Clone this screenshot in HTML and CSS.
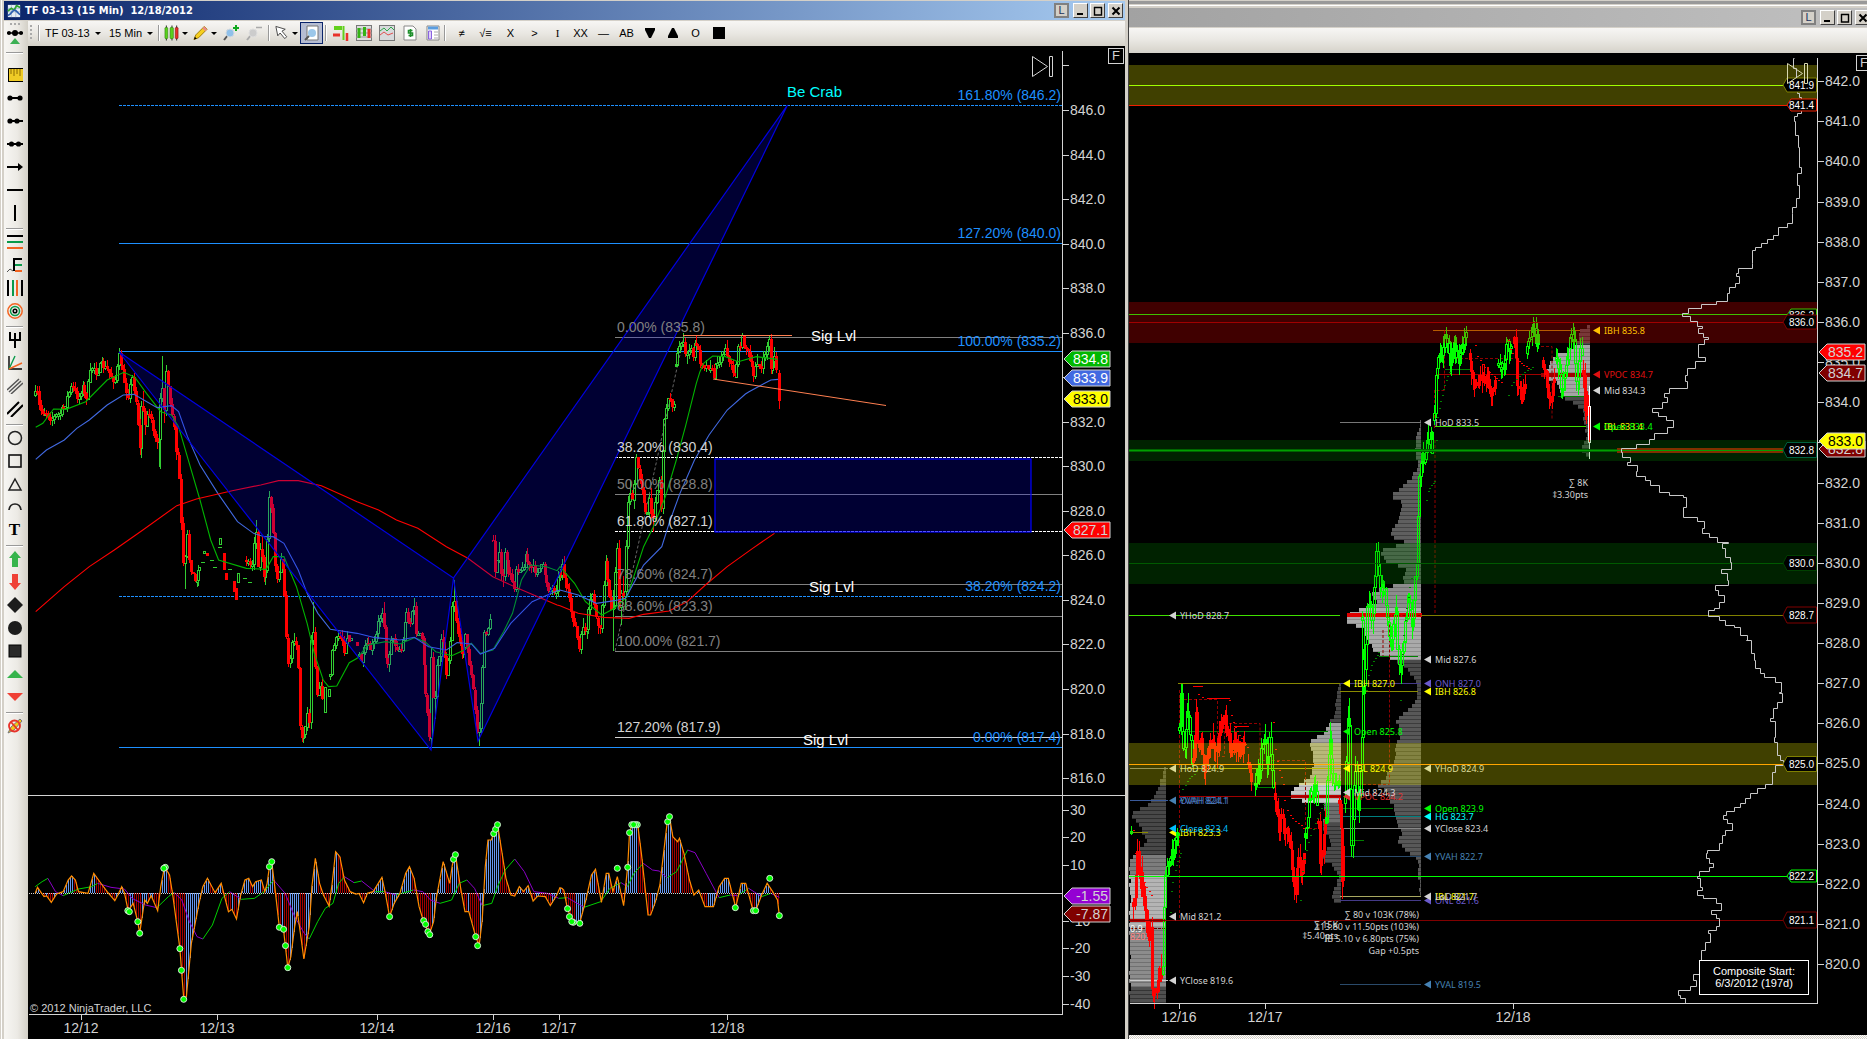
FILE: index.html
```html
<!DOCTYPE html>
<html lang="en">
<head>
<meta charset="utf-8">
<title>TF 03-13 (15 Min) 12/18/2012</title>
<link rel="stylesheet" href="styles.css">
</head>
<body>
<main class="desktop">
  <section class="window window-main">
    <header class="titlebar">
      <svg class="app-icon" viewBox="0 0 16 16"><rect x="1" y="1" width="14" height="14" fill="#e4ecf4"/><path d="M1 5h14M1 9h14M5 1v14M10 1v14" stroke="#a9bccd"/><path d="M1 8l4-3 3 2 3-5 4 2" fill="none" stroke="#2ea52e" stroke-width="2"/><path d="M1 13c4 0 5-7 8-6s3 4 6 5" fill="none" stroke="#2c5fb0" stroke-width="2"/></svg>
      <h1>TF 03-13 (15 Min)&nbsp; 12/18/2012</h1>
      <div class="controls">
        <button class="ctl link">L</button>
        <button class="ctl" aria-label="Minimize"><svg viewBox="0 0 10 10"><path d="M1 8h6" stroke="#000" stroke-width="2"/></svg></button>
        <button class="ctl" aria-label="Maximize"><svg viewBox="0 0 10 10"><path d="M1 1.5h8M1.500 1v8h7v-8" fill="none" stroke="#000" stroke-width="1.400"/></svg></button>
        <button class="ctl close" aria-label="Close"><svg viewBox="0 0 10 10"><path d="M1.500 1.500l7 7m0-7l-7 7" stroke="#000" stroke-width="2"/></svg></button>
      </div>
    </header>
    <div class="body">
      <nav class="drawbar" aria-label="Drawing tools">
        <div class="drawbar-head">
          <span class="grip-h"></span>
          <button aria-label="Snap mode"><svg viewBox="0 0 16 16"><path d="M0 4h16" stroke="#000" stroke-width="1.500"/><circle cx="8" cy="4" r="3"/><circle cx="2" cy="4" r="2"/><circle cx="14" cy="4" r="2"/><path d="M3 15l5-6 5 6z" fill="#3cb054"/></svg></button>
          <span class="rule"></span>
        </div>
        <button aria-label="Ruler"><svg viewBox="0 0 16 16"><rect x="1" y="1.500" width="15" height="13" fill="#efcb26"/><path d="M1.500 15V1.500H16M1 14.500h15" fill="none" stroke="#000"/><path d="M4 2v5M7 2v7M10 2v5M13 2v7" stroke="#8b6a00"/></svg></button>
        <button aria-label="Line"><svg viewBox="0 0 16 16"><path d="M2 8h12" stroke="#000" stroke-width="2"/><circle cx="3" cy="8" r="2.600"/><circle cx="13" cy="8" r="2.600"/></svg></button>
        <button aria-label="Ray"><svg viewBox="0 0 16 16"><path d="M2 8h14" stroke="#000" stroke-width="2"/><circle cx="3" cy="8" r="2.600"/><circle cx="10" cy="8" r="2.600"/></svg></button>
        <button aria-label="Extended line"><svg viewBox="0 0 16 16"><path d="M0 8h16" stroke="#000" stroke-width="2"/><circle cx="4.500" cy="8" r="2.600"/><circle cx="11.500" cy="8" r="2.600"/></svg></button>
        <button aria-label="Arrow line"><svg viewBox="0 0 16 16"><path d="M0 8h13" stroke="#000" stroke-width="2"/><path d="M11 4l5 4-5 4z"/></svg></button>
        <button aria-label="Horizontal line"><svg viewBox="0 0 16 16"><path d="M0 8h16" stroke="#000" stroke-width="2"/></svg></button>
        <button aria-label="Vertical line"><svg viewBox="0 0 16 16"><path d="M8 0v16" stroke="#000" stroke-width="2"/></svg></button>
        <span class="rule"></span>
        <button aria-label="Fibonacci retracements"><svg viewBox="0 0 16 16"><path d="M0 2h16" stroke="#000" stroke-width="2"/><path d="M0 8h16" stroke="#0a9a4a" stroke-width="2"/><path d="M0 14h16" stroke="#f26522" stroke-width="2"/></svg></button>
        <button aria-label="Fibonacci extensions"><svg viewBox="0 0 16 16"><path d="M15 2H7v12" fill="none" stroke="#000" stroke-width="2"/><path d="M8 8h7" stroke="#0a9a4a" stroke-width="2"/><path d="M8 14h7" stroke="#f26522" stroke-width="2"/><path d="M0 15l3-3 3 2" fill="none" stroke="#555"/></svg></button>
        <button aria-label="Fibonacci time"><svg viewBox="0 0 16 16"><path d="M1 0v16M15 0v16" stroke="#000" stroke-width="2"/><path d="M6 0v16" stroke="#0a9a4a" stroke-width="2"/><path d="M10 0v16" stroke="#f26522" stroke-width="2"/></svg></button>
        <button aria-label="Fibonacci circle"><svg viewBox="0 0 16 16" fill="none" stroke-width="1.500"><circle cx="8" cy="8" r="7.200" stroke="#f26522"/><circle cx="8" cy="8" r="4.500" stroke="#0a9a4a"/><circle cx="8" cy="8" r="1.800" stroke="#000"/></svg></button>
        <span class="rule"></span>
        <button aria-label="Andrews pitchfork"><svg viewBox="0 0 16 16"><path d="M3 0v8h10V0M8 1v15" fill="none" stroke="#000" stroke-width="2"/></svg></button>
        <button aria-label="Gann fan"><svg viewBox="0 0 16 16" fill="none" stroke-width="1.400"><path d="M2 1v13h13" stroke="#000"/><path d="M2 14L8 1" stroke="#0a9a4a"/><path d="M2 14l13-6" stroke="#f26522"/></svg></button>
        <button aria-label="Regression channel"><svg viewBox="0 0 16 16"><path d="M0 12L12 1M2 14L14 3M4 16L16 5" stroke="#555" stroke-width="1.500"/></svg></button>
        <button aria-label="Trend channel"><svg viewBox="0 0 16 16"><path d="M0 13L12 1M4 16L16 4" stroke="#000" stroke-width="2"/></svg></button>
        <span class="rule"></span>
        <button aria-label="Ellipse"><svg viewBox="0 0 16 16"><circle cx="8" cy="8" r="6.500" fill="none" stroke="#222" stroke-width="1.500"/></svg></button>
        <button aria-label="Rectangle"><svg viewBox="0 0 16 16"><rect x="2" y="2" width="12" height="12" fill="none" stroke="#111" stroke-width="1.600"/></svg></button>
        <button aria-label="Triangle"><svg viewBox="0 0 16 16"><path d="M8 3l6 11H2z" fill="none" stroke="#222" stroke-width="1.500"/></svg></button>
        <button aria-label="Arc"><svg viewBox="0 0 16 16"><path d="M2 11c1-8 11-8 12 0" fill="none" stroke="#222" stroke-width="1.700"/></svg></button>
        <button class="text-tool" aria-label="Text">T</button>
        <span class="rule"></span>
        <button aria-label="Arrow up"><svg viewBox="0 0 16 16"><path d="M8 0l6 7h-3v9H5V7H2z" fill="#36b44c"/></svg></button>
        <button aria-label="Arrow down"><svg viewBox="0 0 16 16"><path d="M8 16l6-7h-3V0H5v9H2z" fill="#ef4035"/></svg></button>
        <button aria-label="Diamond"><svg viewBox="0 0 16 16"><path d="M8 0l8 8-8 8-8-8z" fill="#1c1c1c"/></svg></button>
        <button aria-label="Dot"><svg viewBox="0 0 16 16"><circle cx="8" cy="8" r="7" fill="#1c1c1c"/></svg></button>
        <button aria-label="Square"><svg viewBox="0 0 16 16"><rect x="2" y="2" width="12" height="12" fill="#2a2a2a" stroke="#000"/></svg></button>
        <button aria-label="Triangle up"><svg viewBox="0 0 16 16"><path d="M8 4l8 8H0z" fill="#36b44c"/></svg></button>
        <button aria-label="Triangle down"><svg viewBox="0 0 16 16"><path d="M8 12l8-8H0z" fill="#ef4035"/></svg></button>
        <span class="rule"></span>
        <button aria-label="Remove drawings"><svg viewBox="0 0 16 16"><path d="M1 15l3-6 9-8 2 2-8 9z" fill="#f5c518" stroke="#777"/><circle cx="7.500" cy="8" r="5.500" fill="none" stroke="#e8322a" stroke-width="1.800"/><path d="M4 4l7 8" stroke="#e8322a" stroke-width="1.800"/></svg></button>
      </nav>
      <div class="content">
        <div class="toolbar">
          <span class="grip-v"></span><span class="vrule"></span>
          <button class="pick instrument">TF 03-13<i class="caret"></i></button>
          <button class="pick interval">15 Min<i class="caret"></i></button>
          <span class="vrule"></span>
          <button class="menu" aria-label="Chart style"><svg viewBox="0 0 16 16"><path d="M2.500 0v16M8.500 0v16M13.500 0v16" stroke="#222"/><rect x="1" y="2" width="3" height="12" rx="1" fill="#5ad11c" stroke="#2a7a0a" stroke-width=".6"/><rect x="6.500" y="2" width="3.500" height="12" rx="1" fill="#5ad11c" stroke="#2a7a0a" stroke-width=".6"/><rect x="12" y="2" width="3" height="12" rx="1" fill="#e8322a" stroke="#7a1010" stroke-width=".6"/></svg><i class="caret"></i></button>
          <button class="menu" aria-label="Draw"><svg viewBox="0 0 16 16"><path d="M1 15l2-5L12 1l3 3-9 9z" fill="#f6cf1e" stroke="#9a7600"/><path d="M12 1l3 3-2 2-3-3z" fill="#e98b8b"/><path d="M1 15l1-3 2 2z"/></svg><i class="caret"></i></button>
          <span class="zoomers">
            <button class="tool" aria-label="Zoom in"><svg viewBox="0 0 16 16"><path d="M1 15l4-5" stroke="#555" stroke-width="2"/><circle cx="7" cy="8" r="4" fill="#8fc0ea" stroke="#cfd8df"/><path d="M13 0v6M10 3h6" stroke="#10a820" stroke-width="2"/></svg></button>
            <button class="tool" aria-label="Zoom out"><svg viewBox="0 0 16 16"><path d="M1 15l4-5" stroke="#aaa" stroke-width="2"/><circle cx="7" cy="8" r="4" fill="#ccc" stroke="#ddd"/><path d="M10 2.500h6" stroke="#aaa" stroke-width="1.500"/></svg></button>
          </span>
          <span class="vrule"></span>
          <button class="menu" aria-label="Cursor"><svg viewBox="0 0 16 16"><path d="M2 1l10 3-3.500 2 5 6-2 2-5-6L4 11z" fill="#fff" stroke="#444"/></svg><i class="caret"></i></button>
          <button class="tool active" aria-label="Data box" aria-pressed="true"><svg viewBox="0 0 16 16"><path d="M3 1h11v14H3z" fill="#fff" stroke="#777"/><circle cx="8" cy="8" r="4" fill="#9cc7ea"/><path d="M1 15l4-4" stroke="#555" stroke-width="2"/></svg></button>
          <span class="vrule tight"></span>
          <button class="tool" aria-label="Chart trader"><svg viewBox="0 0 16 16"><path d="M1 3h8" stroke="#62d01c" stroke-width="4"/><path d="M0 10h7" stroke="#e8322a" stroke-width="3"/><path d="M10.500 1v14" stroke="#62d01c" stroke-width="2"/><path d="M14 8v8" stroke="#e8322a" stroke-width="2.500"/></svg></button>
          <button class="tool" aria-label="Data series"><svg viewBox="0 0 16 16"><rect x=".5" y=".5" width="15" height="15" fill="#ddd" stroke="#777"/><path d="M0 4h16M0 8h16M0 12h16" stroke="#999"/><path d="M3 3v10M8.500 2v9" stroke="#35b315" stroke-width="3"/><path d="M13 4v9" stroke="#e8322a" stroke-width="3"/></svg></button>
          <button class="tool" aria-label="Indicators"><svg viewBox="0 0 16 16"><rect x=".5" y=".5" width="15" height="15" fill="#d8dadc" stroke="#777"/><path d="M1 6l4-3 3 3 4-4 3 3" fill="none" stroke="#2faa4a"/><path d="M1 10l4-3 4 3 5-2" fill="none" stroke="#e05050"/></svg></button>
          <button class="tool" aria-label="Strategies"><svg viewBox="0 0 16 16"><path d="M2 1h9l3 3v11H2z" fill="#fff" stroke="#888"/><path d="M10.500 5.500h-4v2.500h4v2.500h-4M8.500 4v8" fill="none" stroke="#1f8f2c" stroke-width="1.600"/></svg></button>
          <button class="tool" aria-label="Properties"><svg viewBox="0 0 16 16"><path d="M2 1h12v14H2z" fill="#fff" stroke="#888"/><path d="M3 3h10" stroke="#5a9de0" stroke-width="3"/><path d="M3.500 6h3v8h-3z" fill="#ded0fa" stroke="#8a62e0"/><path d="M9 7h4M9 10h4M9 13h4" stroke="#aaa"/></svg></button>
          <span class="vrule"></span>
          <button class="mark">≠</button><button class="mark wide">√≡</button><button class="mark wide">X</button><button class="mark">&gt;</button><button class="mark serif">I</button><button class="mark">XX</button><button class="mark">—</button><button class="mark">AB</button>
          <button class="mark" aria-label="Triangle down marker"><svg viewBox="0 0 12 12"><path d="M1 1h10v2L7 11H5L1 3z"/></svg></button><button class="mark" aria-label="Triangle up marker"><svg viewBox="0 0 12 12"><path d="M1 11h10V9L7 1H5L1 9z"/></svg></button><button class="mark">O</button><button class="mark" aria-label="Square marker"><svg viewBox="0 0 12 12"><path d="M0 0h12v12H0z"/></svg></button>
        </div>
        <div class="chart">
          <svg id="main-chart" viewBox="28 46 1097 993" preserveAspectRatio="xMinYMin meet" role="img" aria-label="TF 03-13 15 minute price and oscillator"></svg>
          <button class="fix">F</button>
        </div>
      </div>
    </div>
  </section>
  <section class="window window-profile">
    <div class="behind"></div>
    <header class="titlebar inactive">
      <div class="controls">
        <button class="ctl link">L</button>
        <button class="ctl" aria-label="Minimize"><svg viewBox="0 0 10 10"><path d="M1 8h6" stroke="#000" stroke-width="2"/></svg></button>
        <button class="ctl" aria-label="Maximize"><svg viewBox="0 0 10 10"><path d="M1 1.500h8M1.500 1v8h7v-8" fill="none" stroke="#000" stroke-width="1.400"/></svg></button>
        <button class="ctl close" aria-label="Close"><svg viewBox="0 0 10 10"><path d="M1.500 1.500l7 7m0-7l-7 7" stroke="#000" stroke-width="2"/></svg></button>
      </div>
    </header>
    <div class="toolbar"></div>
    <div class="chart">
      <svg id="profile-chart" viewBox="1129 53 738 982" preserveAspectRatio="xMinYMin meet" role="img" aria-label="Composite volume profile"></svg>
      <button class="fix fix-edge">F</button>
    </div>
    <div class="scrollbar"></div>
  </section>
</main>
<script src="charts.js"></script>
</body>
</html>
```
FILE: styles.css
```css
* { box-sizing: border-box; }
body { margin: 0; background: #000; font-family: "Liberation Sans", Arial, sans-serif; overflow: hidden; }
button { margin: 0; padding: 0; border: 0; background: none; font: inherit; color: #000; }
.desktop { display: grid; grid-template-columns: 1129fr 738fr; height: 100vh; }
.window { display: flex; flex-direction: column; min-width: 0; min-height: 0; overflow: hidden; }
.window-main { background: #d4d0c8; border-left: 1px solid #d4d0c8; border-right: 1px solid #404040; padding: 1px 3px 0 3px; box-shadow: inset 1px 0 #fff; }
.titlebar { display: flex; align-items: center; flex: none; height: 19px; gap: 4px; padding: 0 2px 0 3px; background: linear-gradient(90deg, #0a246a, #a6caf0); }
.titlebar h1 { margin: 0; flex: 1; font: bold 11px/19px "DejaVu Sans Condensed", "DejaVu Sans", sans-serif; color: #fff; white-space: nowrap; }
.app-icon { width: 14px; height: 16px; }
.controls { display: flex; gap: 2px; margin-left: auto; }
.ctl { display: grid; place-items: center; width: 15px; height: 15px; background: #d4d0c8; border: 1px solid; border-color: #fff #404040 #404040 #fff; font-size: 11px; line-height: 11px; }
.ctl svg { width: 10px; height: 10px; }
.ctl.link { border: 2px solid #808080; color: #20305c; margin-right: 2px; }
.ctl.close { margin-left: 1px; }
.body { display: flex; flex: 1; min-height: 0; padding-top: 1px; }
.drawbar { display: flex; flex-direction: column; align-items: center; flex: none; width: 24px; background: linear-gradient(90deg, #f7f6f3, #eceae5 55%, #d3d0c7); }
.drawbar button { display: grid; place-items: center; flex: none; width: 22px; height: 23px; margin-right: 3px; }
.drawbar svg { width: 16px; height: 16px; }
.drawbar-head { display: flex; flex-direction: column; align-items: center; flex: none; height: 42px; }
.grip-h { width: 10px; height: 2px; margin: 2px 3px 0 0; background: repeating-linear-gradient(90deg, #aaa 0 2px, transparent 2px 4px); }
.rule { flex: none; width: 17px; height: 6px; margin-right: 3px; border-bottom: 1px solid #fff; box-shadow: inset 0 -1px #999; }
.text-tool { font: bold 17px/20px "Liberation Serif", serif; }
.content { display: flex; flex-direction: column; flex: 1; min-width: 0; }
.toolbar { display: flex; align-items: center; flex: none; height: 25px; padding-bottom: 1px; background: linear-gradient(#f7f6f4, #e9e7e2 50%, #d5d2c9); font-size: 11px; }
.grip-v { width: 2px; height: 16px; margin: 0 6px 0 2px; background: repeating-linear-gradient(#aaa 0 2px, transparent 2px 4px); }
.vrule { flex: none; width: 2px; height: 16px; border-left: 1px solid #999; border-right: 1px solid #fff; margin-right: 4px; }
.vrule.tight { margin-right: 2px; }
.pick { display: flex; align-items: center; justify-content: space-between; height: 22px; white-space: nowrap; }
.instrument { width: 56px; margin: 0 8px 0 1px; }
.interval { width: 44px; margin-right: 5px; }
.caret { width: 0; height: 0; border: 3px solid transparent; border-top: 3px solid #000; border-bottom: 0; }
.menu { display: flex; align-items: center; justify-content: space-between; width: 24px; height: 22px; margin-right: 5px; }
.menu svg { width: 15px; height: 16px; }
.zoomers { display: flex; margin: 0 3px 0 -3px; }
.tool { display: grid; place-items: center; width: 23px; height: 22px; }
.tool svg { width: 16px; height: 16px; }
.active { margin: 0 2px 0 -3px; background: #b6bdd2; border: 1px solid #0a246a; }
.mark { display: grid; place-items: center; width: 23px; height: 22px; }
.mark svg { width: 12px; height: 12px; }
.wide { width: 25px; }
.serif { font-family: "Liberation Serif", serif; }
.chart { position: relative; flex: 1; min-height: 0; background: #000; overflow: hidden; }
.chart svg { display: block; width: 100%; height: 100%; }
.fix { position: absolute; top: 2px; right: 1px; width: 16px; height: 16px; border: 1px solid #d3d3d3; color: #d3d3d3; font-size: 13px; line-height: 14px; }
.fix-edge { right: -5px; }
.window-profile { background: #d4d0c8; }
.behind { flex: none; height: 8px; background: linear-gradient(#d4d0c8 0 1px, #999 1px 4px, #d4d0c8 4px 5px, #fff 5px 6px, #d4d0c8 6px); }
.inactive { background: linear-gradient(90deg, #a2a2a2, #c0c0c0); margin-right: -5px; margin-bottom: 1px; }
.scrollbar { flex: none; height: 4px; background: repeating-conic-gradient(#fff 0 25%, #d4d0c8 0 50%) 0 0 / 2px 2px; }
svg text { font-family: "Liberation Sans", Arial, sans-serif; font-size: 14px; fill: #d3d3d3; }
svg .label { font-size: 15px; }
svg .note { font-family: "Noto Sans", "Open Sans", sans-serif; font-size: 9px; }
svg .tag { font-size: 10px; fill: #fff; }
svg .small { font-size: 11px; fill: #fff; }
svg .copy { font-size: 11px; }
svg .end { text-anchor: end; }
svg .mid { text-anchor: middle; }
```
FILE: charts.js
```js
const NS = 'http://www.w3.org/2000/svg';
let seed = 7;
const rnd = () => (seed = (seed * 16807) % 2147483647) / 2147483647;

function add(svg, tag, attrs, text) {
  const el = document.createElementNS(NS, tag);
  for (const k in attrs) el.setAttribute(k, attrs[k]);
  if (text !== undefined) el.textContent = text;
  svg.append(el);
  return el;
}
const nums = s => s.trim().split(/[\s,]+/).map(Number);
// Map "x,y x,y" pairs through an origin and a scale to chart units.
function pts(s, [ox, oy, sx, sy]) {
  const n = nums(s), out = [];
  for (let i = 0; i < n.length; i += 2) out.push([ox + n[i] / sx, oy + n[i + 1] / sy]);
  return out;
}
const line = (svg, x1, y1, x2, y2, stroke, extra = {}) =>
  add(svg, 'line', { x1, y1, x2, y2, stroke, 'shape-rendering': 'crispEdges', ...extra });
const hline = (svg, x1, x2, y, stroke, extra = {}) =>
  add(svg, 'rect', { x: x1, y: Math.floor(y), width: x2 - x1, height: 1, fill: stroke, ...extra });
const dash = (svg, x1, x2, y, stroke, d = '3 1') => line(svg, x1, Math.floor(y) + .5, x2, Math.floor(y) + .5, stroke, { 'stroke-dasharray': d });
const poly = (svg, p, stroke, extra = {}) =>
  add(svg, 'polyline', { points: p.map(a => a.join()).join(' '), fill: 'none', stroke, 'stroke-width': 1, ...extra });
const text = (svg, x, y, cls, fill, s) => add(svg, 'text', { x, y, class: cls, style: 'fill:' + fill }, s);
function at(p, x) {
  for (let i = 1; i < p.length; i++) if (x <= p[i][0]) {
    const [a, b] = [p[i - 1], p[i]];
    return a[1] + (b[1] - a[1]) * (x - a[0]) / ((b[0] - a[0]) || 1);
  }
  return p[p.length - 1][1];
}
function bars(svg, p, step, up, down, force, noise = 8) {
  let g = '', r = '', prev = p[0][1];
  for (let x = p[0][0]; x <= p[p.length - 1][0] + .1; x += step) {
    const near = p.filter(a => a[0] > x - step && a[0] <= x).map(a => a[1]);
    const c = at(p, x) + (rnd() - .5) * noise;
    let hi = Math.min(c, prev, ...near), lo = Math.max(c, prev, ...near);
    const top = Math.round(Math.min(c, prev)), h = Math.max(2, Math.round(Math.abs(c - prev)));
    hi -= rnd() * noise * .8; lo += rnd() * noise * .8;
    const X = Math.round(x);
    const rise = force ? force === 'g' : c <= prev;
    if (rise) g += `M${X + .5} ${Math.round(hi)}V${top}M${X + .5} ${top + h}V${Math.round(lo)}M${X - .5} ${top + .5}h2v${h}h-2z`;
    else r += `M${X + .5} ${Math.round(hi)}V${Math.round(lo)}M${X - .5} ${top}v${h}M${X + 1.5} ${top}v${h}`;
    prev = c;
  }
  const o = { fill: 'none', 'shape-rendering': 'crispEdges' };
  if (g) add(svg, 'path', { d: g, stroke: up, ...o });
  if (r) add(svg, 'path', { d: r, stroke: down, ...o });
}
function priceTag(svg, x, y, fill, ink, s) {
  add(svg, 'path', { d: `M${x} ${y}l8 -8h38v16h-38z`, fill, stroke: '#d3d3d3' });
  text(svg, x + 44, y + 5, 'end', ink, s);
}

/* ---------- main chart ---------- */
const m = document.getElementById('main-chart');
const A = [0, 340, 2.8, 3], B = [560, 380, 2.751, 3], C = [560, 0, 2.751, 3];
const BLUE = '#1e90ff', GREY = '#808080', PALE = '#d3d3d3';

dash(m, 119, 1062, 105, BLUE); hline(m, 119, 1062, 243, BLUE); hline(m, 119, 1062, 351, BLUE);
dash(m, 119, 1062, 596, BLUE); hline(m, 119, 1062, 747, BLUE);
[337, 494, 584, 616, 651].forEach(y => hline(m, 615, 1062, y, GREY));
dash(m, 615, 1062, 457, '#fff'); dash(m, 615, 1062, 531, '#fff'); hline(m, 615, 1062, 737, PALE);
add(m, 'path', { d: 'M615 651L684 336', stroke: '#666', 'stroke-dasharray': '3 2' });

bars(m, pts('98,165 104,160 110,210 130,215 143,235 165,222 180,200 190,165 200,140 218,175 230,135 240,180 252,100 260,72 268,95 285,75 300,90 320,125 333,45 345,110 357,170 370,110 382,200 391,335 397,165 405,270 412,210 425,245 435,320 445,300 446,370 450,130 452,65 458,235 465,90 475,200 485,240 490,340 500,350 505,500 512,650 515,735 522,570 530,670 545,725 556,690', A), 1.9, '#32cd32', '#f00');
bars(m, pts('690,660 705,680 715,550 722,670 730,610 738,720 745,690 753,470 760,500 770,680 777,720 785,640 795,720 800,850 807,980 822,890 832,920 838,1150 845,1205 853,1160 862,1110 868,1160 872,800 880,930 885,1070 893,1030 905,1075', A), 1.9, '#32cd32', '#f00');
bars(m, pts('925,1010 930,930 945,890 955,890 963,930 970,885 985,905', A), 1.9, '#32cd32', '#f00');
bars(m, pts('1005,945 1012,965 1025,910 1035,930 1050,905 1058,850 1072,800 1078,940 1085,980 1095,890 1110,920 1125,930 1135,815 1150,850 1157,780 1165,880 1180,890 1190,1040 1203,1215 1207,940 1215,1120 1222,980 1237,880 1250,1000 1262,880 1268,740 1275,830 1290,940 1303,890 1315,980 1325,1060 1337,1200 1345,1100 1355,890 1365,865 1377,830', A), 1.9, '#32cd32', '#f00');
bars(m, pts('1381,600 1386,690 1395,625 1405,740 1412,640 1425,700 1440,740 1445,680 1462,690 1472,640 1480,680 1500,690 1520,680 1535,745 1555,750 1568,690', A), 1.9, '#32cd32', '#f00');
bars(m, pts('0,575 8,540 12,620 22,640 30,690 40,730 53,815 62,730 72,770 80,680 90,635 103,750 110,740 118,650 125,525 133,640 145,710 149,600 157,490 163,720 170,600 175,690 183,500 190,310 200,380 208,235 213,260 222,300 235,400 243,410 247,325 252,440 262,350 272,300 277,385 283,180 292,75 302,50 312,85 318,0', B), 1.9, '#32cd32', '#f00');
bars(m, pts('318,1100 325,1050 335,1015 345,1075 355,1040 365,1070 373,1015 385,1080 400,1100 412,1095 422,1130 432,1080 445,1070 455,1035 465,1090 480,1125 490,1050 500,1015 510,1040 520,1075 532,1135 540,1075 553,1110 565,1050 576,1015 580,1120 588,1050 596,1130', C), 1.9, '#32cd32', '#f00');
add(m, 'rect', { x: 778, y: 373, width: 3, height: 28, fill: '#f00' });
line(m, 779.5, 370, 779.5, 409, '#f00'); line(m, 159.500, 420, 159.500, 467, '#32cd32'); line(m, 613.5, 590, 613.5, 651, '#32cd32');
// thin overnight trade: isolated bars
const thin = '556,682,8 565,667,1 570,634,6 592,660,1 598,682,1 612,622,1 617,595,18 642,688,1 667,700,27 683,715,1 698,727,1 911,1040,75 920,1048,22'.split(' ');
thin.forEach(t => { const [x, y, h] = t.split(',').map(Number); add(m, 'rect', { x: Math.round(x / 2.8) - .5, y: Math.round(340 + y / 3) + .5, width: h > 1 ? 2 : 3, height: Math.max(.1, Math.round(h / 3)), fill: 'none', stroke: '#32cd32', 'shape-rendering': 'crispEdges' }); });
'580,640,10 626,640,50 632,700,22 654,722,32 660,745,35 978,885,20 1000,905,12'.split(' ').forEach(t => { const [x, y, h] = t.split(',').map(Number); add(m, 'rect', { x: Math.round(x / 2.8) - 1, y: Math.round(340 + y / 3), width: 3, height: Math.round(h / 3), fill: '#f00' }); });

const avg = (a, b, c, col) => poly(m, [...pts(a, A), ...pts(b, B), ...(c ? pts(c, C) : [])], col, { 'stroke-width': 1.1 });
avg('100,262 120,250 150,207 185,208 240,185 300,120 347,97 378,112 410,160 450,215 480,225 500,260 530,370 560,480 590,600 612,660 690,685 745,688 765,650 795,650 830,740 860,850 880,940 905,1020 920,1040 943,1038 978,968 1000,955 1030,915 1080,905 1120,912 1160,893 1190,905 1220,935 1265,947 1300,930 1320,910 1345,940 1380,930 1410,875 1435,820 1460,720 1485,675 1530,680 1560,692',
  '0,560 40,610 70,665 115,705 150,685 185,650 200,600 230,500 255,445 290,350 320,240 345,140 375,10', '385,1115 395,1090 420,1068 455,1070 490,1085 540,1070 598,1078', '#00b400');
avg('100,358 130,330 180,300 215,265 250,240 300,195 345,165 375,163 440,203 480,197 500,215 525,290 560,375 610,460 665,545 710,580 740,590 765,590 795,610 835,690 860,760 890,820 925,868 1000,880 1050,893 1120,900 1160,892 1200,920 1250,930 1280,908 1320,912 1345,942 1385,925 1430,850 1490,785 1560,752',
  '0,630 50,645 100,670 150,662 180,655 205,605 230,555 280,500 300,430 330,340 370,240 410,165 460,90 510,42', '520,1175 580,1140 600,1138', '#4169e1');
avg('100,815 180,740 250,680 320,630 400,570 495,497 550,477 650,452 730,435 780,422 835,422 900,437 1000,485 1060,510 1110,540 1170,565 1250,620 1310,655 1380,710 1450,745 1560,795',
  '0,677 50,700 120,712 190,715 230,703 300,693 350,665 400,615 460,560 530,505 590,460', '', '#f00');

const wing = { fill: '#00f', 'fill-opacity': .2, stroke: '#0000e0', 'stroke-width': 1.2 };
add(m, 'polygon', { points: '119,352 431,750 453.500,578', ...wing });
add(m, 'polygon', { points: '453.500,578 478,741 787.500,105', ...wing });
add(m, 'rect', { x: 715, y: 459, width: 316, height: 73, ...wing, stroke: '#00f' });
add(m, 'path', { d: 'M683 335.500H792M713 379L886 405.500', stroke: '#ff7f50', fill: 'none' });

[['161.80% (846.2)', 100], ['127.20% (840.0)', 238], ['100.00% (835.2)', 346], ['38.20% (824.2)', 591], ['0.00% (817.4)', 742]].forEach(([s, y]) => text(m, 1061, y, 'end', BLUE, s));
[['0.00% (835.8)', 332, GREY], ['38.20% (830.4)', 452, PALE], ['50.00% (828.8)', 489, GREY], ['61.80% (827.1)', 526, PALE], ['78.60% (824.7)', 579, GREY], ['88.60% (823.3)', 611, GREY], ['100.00% (821.7)', 646, GREY], ['127.20% (817.9)', 732, PALE]].forEach(([s, y, c]) => text(m, 617, y, '', c, s));
text(m, 787, 97, 'label', '#0ff', 'Be Crab');
text(m, 811, 341, 'label', '#fff', 'Sig Lvl'); text(m, 809, 592, 'label', '#fff', 'Sig Lvl'); text(m, 803, 745, 'label', '#fff', 'Sig Lvl');
add(m, 'path', { d: 'M1032.500 56.500v20l15-10zM1049.500 56.500h3v20h-3z', fill: 'none', stroke: PALE });

line(m, 1062.5, 51, 1062.5, 1015, PALE);
line(m, 1063, 65.5, 1069, 65.5, PALE);
for (let p = 846; p >= 816; p -= 2) {
  const y = Math.round(110 + (846 - p) * 22.27);
  hline(m, 1063, 1069, y, PALE);
  if (p !== 834) text(m, 1070, y + 5, '', PALE, p.toFixed(1));
}
priceTag(m, 1064, 359, '#00b800', '#fff', '834.8');
priceTag(m, 1064, 378, '#4169e1', '#fff', '833.9');
priceTag(m, 1064, 399, '#ff0', '#000', '833.0');
priceTag(m, 1064, 530, '#f00', PALE, '827.1');

// oscillator panel
hline(m, 28, 1125, 795, PALE); hline(m, 29, 1063, 1014, PALE);
const D = [0, 740, 2.613, 3], E = [560, 740, 2.7034, 3];
const osc = [...pts('92,460 98,442 115,470 122,468 134,487 148,462 165,455 178,420 187,408 197,420 205,455 230,460 245,400 265,432 280,455 300,482 308,465 318,440 325,458 335,512 348,490 360,545 365,580 378,480 385,490 395,467 412,512 420,440 430,380 443,405 452,470 470,625 480,775 487,770 500,610 520,490 530,440 542,415 562,458 578,430 597,515 606,508 618,537 628,470 640,420 650,415 660,440 668,425 683,420 692,455 698,430 704,380 710,365 718,440 730,562 740,560 752,683 760,650 770,560 777,515 785,580 794,657 808,560 815,440 824,355 835,430 845,465 860,498 868,430 877,335 888,350 900,420 915,455 930,462 938,460 950,488 960,460 975,455 998,412 1007,460 1018,530 1030,490 1045,460 1060,400 1070,380 1082,415 1095,500 1107,545 1122,583 1133,545 1140,475 1158,365 1175,430 1182,375 1190,343 1203,440 1215,515 1225,515 1243,590 1252,617 1260,540 1268,380 1275,300 1284,300 1290,280 1300,253 1312,340 1322,415 1335,465 1345,468 1357,440 1368,455 1380,437 1393,483 1405,468 1425,470 1438,497 1455,465 1463,443', D),
  ...pts('5,445 10,450 20,505 35,550 53,550 70,480 85,405 96,388 112,487 125,400 132,400 143,455 155,410 172,497 183,380 188,277 195,254 210,254 220,340 238,525 245,525 258,485 270,435 280,340 290,245 296,230 305,290 318,305 323,295 335,340 350,420 362,465 375,450 392,500 415,500 430,440 445,415 455,415 470,480 475,502 490,430 502,430 522,512 530,510 545,465 560,430 575,455 588,480 593,527', E)];
let last = osc[0][1];
for (let x = 36; x <= 779; x += 2) {
  const y = at(osc, x), t = Math.min(y, 893), h = Math.abs(y - 893);
  if (h > 1) add(m, 'rect', { x, y: Math.round(t), width: 1, height: Math.round(h), fill: y <= last ? '#6495ed' : '#a00000' });
  last = y;
}
const slow = [...pts('92,440 110,425 125,415 145,455 165,467 205,447 240,440 255,430 290,442 325,447 345,475 380,495 410,503 440,470 455,457 475,480 495,545 515,590 530,597 555,555 580,475 600,455 630,478 665,475 690,455 715,420 745,460 770,530 795,580 808,597 830,545 850,505 870,490 885,430 900,410 925,428 945,423 980,455 1005,455 1035,465 1080,450 1105,455 1125,480 1150,490 1180,480 1200,430 1220,420 1240,445 1260,497 1285,490 1300,440 1320,390 1345,357 1370,395 1395,455 1430,460 1460,475', D),
  ...pts('20,473 65,502 110,485 135,445 165,428 182,440 200,400 225,370 250,390 268,393 290,413 315,395 345,330 365,338 395,400 430,473 460,465 480,467 510,445 545,470 570,460 593,472', E)];
for (let i = 1; i < slow.length; i++) poly(m, [slow[i - 1], slow[i]], slow[i][1] <= slow[i - 1][1] ? '#00d000' : '#8b00c8');
dash(m, 29, 780, 893, PALE, '1 1'); hline(m, 780, 1063, 893, PALE);
poly(m, osc, '#ff8c00', { 'stroke-width': 1.2 });
[...pts('334,512 338,515 360,545 365,580 432,382 428,385 470,626 474,691 480,778 704,380 710,365 730,562 741,568 746,617 752,683 1018,530 1107,542 1112,553 1118,575 1123,584 1185,358 1190,344 1243,590 1248,617 1290,281 1295,268 1300,254 1483,506 1488,530 1498,547 1494,545 1515,550', D),
  ...pts('155,385 183,382 188,278 194,254 209,254 204,254 199,254 291,245 296,230 474,503 523,512 529,512 567,415 593,527', E)]
  .forEach(([cx, cy]) => add(m, 'circle', { cx, cy, r: 3, fill: '#0f0', stroke: '#d8e8d8' }));
[[30, 810], [20, 837], [10, 865], [-10, 921], [-20, 948], [-30, 976], [-40, 1004]].forEach(([v, y]) => { hline(m, 1063, 1069, y, PALE); text(m, 1070, y + 5, '', PALE, v); });
priceTag(m, 1064, 896, '#9400d3', PALE, '-1.55'); priceTag(m, 1064, 914, '#800000', PALE, '-7.87');
text(m, 30, 1012, 'copy', PALE, '© 2012 NinjaTrader, LLC');
[[81, '12/12'], [217, '12/13'], [377, '12/14'], [493, '12/16'], [559, '12/17'], [727, '12/18']].forEach(([x, s]) => { line(m, x + .5, 1015, x + .5, 1020, PALE); text(m, x, 1033, 'mid', PALE, s); });

/* ---------- composite profile chart ---------- */
const q = document.getElementById('profile-chart');
const F = [1380, 0, 3, 3], G = [1125, 640, 3, 3], H = [1300, 400, 2.7654, 3], K = [1430, 640, 3, 3];

// volume at price: [y, width] keys, bars grow leftwards from the right edge
function volume(right, keys, shade, step = 4) {
  const k = pts(keys, [0, 0, 1, 1]);
  for (let y = k[0][0]; y < k[k.length - 1][0]; y += step) {
    const w = Math.round(at(k, y) + (rnd() - .5) * 2);
    if (w < 1) continue;
    const c = shade(y);
    add(q, 'rect', { x: right - w, y: Math.round(y), width: w, height: step, fill: `rgb(${c},${c},${c})` });
    add(q, 'rect', { x: right - w, y: Math.round(y) + step - 1, width: w, height: 1, fill: `rgb(${c - 28},${c - 28},${c - 28})` });
  }
}
volume(1166, '767,2 787,8 803,18 813,36 822,28 840,18 850,28 857,36 1002,36', y => y < 855 ? 72 : y < 872 ? 125 : y < 925 ? 180 : y < 985 ? 140 : 80);
volume(1341, '683,2 700,6 710,5 722,12 730,16 740,32 750,29 763,27 773,30 783,42 791,50 798,50 801,19 812,15 826,19 834,12 843,9 856,23 862,10 873,2 886,5 893,10 901,5', y => y < 722 ? 70 : y < 780 ? 160 : y < 800 ? 200 : y < 820 ? 110 : 75);
volume(1421, '420,1 450,6 466,2 480,13 490,25 494,31 500,20 515,21 527,28 535,31 541,14 549,42 560,35 567,15 580,18 585,30 590,50 600,44 610,67 615,75 620,73 628,58 640,52 650,46 657,28 665,15 675,8 683,3 700,5 710,15 719,25 730,20 740,23 752,26 762,28 775,35 784,43 790,35 805,28 815,26 830,20 840,22 850,14 857,4 870,2 898,1', y => y < 583 ? 95 : y < 608 ? 140 : y < 657 ? 170 : y < 700 ? 75 : 88);
volume(1590, '325,2 330,11 343,13 350,25 355,35 363,41 370,45 375,49 380,34 395,27 403,15 410,7 420,6 433,3 447,9 457,2', y => y < 345 ? 75 : y < 397 ? 165 : 75);
add(q, 'rect', { x: 1347, y: 613, width: 75, height: 4, fill: '#e00000' });
add(q, 'rect', { x: 1291, y: 795, width: 50, height: 3, fill: '#c00000' });
add(q, 'rect', { x: 1541, y: 373, width: 49, height: 4, fill: '#a00000' });
add(q, 'rect', { x: 1130, y: 919, width: 36, height: 3, fill: '#b00000' });
dash(q, 1130, 1166, 928, '#600'); text(q, 1130, 932, 'note', '#fff', '0.9'); text(q, 1130, 940, 'note', '#ff8080', '820.');

[[1178, 1341, 683, '#8a8a00'], [1180, 1328, 731, '#008000'], [1180, 1341, 768, '#a0a000'], [1179, 1341, 796, '#a00000'], [1130, 1168, 768, '#777'], [1130, 1168, 800, '#3a5a9a'], [1130, 1148, 832, '#8a8a00'], [1130, 1168, 980, '#ccc'],
 [1340, 1421, 683, '#443a88'], [1340, 1418, 691, '#8a8a00'], [1340, 1393, 808, '#008000'], [1340, 1421, 816, '#008080'], [1340, 1421, 828, '#888'], [1340, 1421, 856, '#2a4a6a'], [1340, 1421, 896, '#a8a860'], [1340, 1421, 900, '#443a88'], [1340, 1421, 984, '#2a4a6a'],
 [1340, 1421, 422, '#777'], [1433, 1580, 330, '#a07800'], [1436, 1590, 374, '#a00000'], [1434, 1586, 426, '#40e000'], [1379, 1418, 656, '#008000'], [1558, 1590, 396, '#008000'], [1350, 1364, 840, '#008000'], [1255, 1274, 787, '#008000'], [1445, 1470, 369, '#008000'], [1193, 1203, 686, '#f00'], [1207, 1230, 698, '#f00'], [1234, 1249, 726, '#f00']]
  .forEach(([a, b, y, c]) => hline(q, a, b, y, c));
add(q, 'path', { d: 'M1179.500 690V920M1179 699.500H1217.500V756.500H1224.500V723.500H1260V760.500H1305.500V828.500H1327.500M1435 440V615.500H1389.500V785M1363 784.500H1389M1383 630V656M1436.500 390.500H1444.500V330M1450 358.500H1519M1541 346.500H1552V420M1434.500 390V430', fill: 'none', stroke: '#900000', 'stroke-dasharray': '3 2' });

const L = '#0f0', R = '#f00', rb = (s, T, f) => bars(q, pts(s, T), 1.3, L, R, f, 16);
rb('17,580 20,715', G, 'g'); rb('25,800 37,650 45,740 50,680 57,790 65,880 75,850 80,1040 95,1065 104,960 110,1050', G, 'r');
rb('113,1000 118,750 120,700 130,680 150,610 163,575', G, 'g');
rb('163,270 166,155 175,350 187,190 200,330 203,405', G, 'g');
rb('205,370 212,220 220,325 230,300 238,405 245,335 262,280 275,345 290,245 298,245 308,280 315,340 325,305 340,325 358,310', G, 'r');
rb('370,365 380,430', G, 'r'); rb('390,430 405,380 418,275 425,385 433,280 445,420', G, 'g');
rb('450,460 462,560 470,510 480,580 495,630 512,755 520,630 528,690 537,610', G, 'r');
rb('540,580 552,480 565,440 575,490', G, 'g'); rb('580,550 583,650 592,650 600,540', G, 'r');
rb('603,530 613,270 625,430 642,440', G, 'g'); rb('643,480 648,600 650,745 655,600 657,440', G, 'r');
rb('660,490 670,180 680,620 690,370 700,520 710,360 712,100 716,10', G, 'g');
rb('172,650 175,850 183,750 188,580 200,670 211,450 222,580 232,560 240,630 252,740 265,620 270,750 277,810 285,730 300,580 310,690 325,460 328,250 335,160 348,175 355,110 362,85 368,170', H, 'g');
rb('163,1260 165,1160 175,1080 185,1060 198,1005 210,1080 222,1050 235,1080 245,1050 260,1000', F, 'g');
rb('270,1060 280,1145 300,1140 320,1140 337,1185 345,1160', F, 'r');
rb('355,1090 370,1105 382,1035 395,1060', F, 'g'); rb('403,1030 412,1165 428,1185 435,1120', F, 'r');
rb('440,1060 448,1010 460,1000 478,1040', F, 'g'); rb('488,1080 505,1195 517,1180 525,1100', F, 'r');
rb('527,1070 545,1170 565,1040 583,1005 590,1180 600,1040 608,1100', F, 'g'); rb('610,1110 614,1230 625,1170', F, 'r');
line(q, 1589.5, 386, 1589.5, 459, '#fff'); add(q, 'rect', { x: 1588.5, y: 406.5, width: 2, height: 36, fill: R, stroke: '#fff' });
// stop dots that trail the trend
const trail = (a, b, n, col) => { for (let i = 0; i < n; i++) hline(q, Math.round(a[0] + (b[0] - a[0]) * i / n), Math.round(a[0] + (b[0] - a[0]) * i / n) + 2, a[1] + (b[1] - a[1]) * Math.sqrt(i / n), col); };
trail([1195, 686], [1205, 700], 3, R); trail([1229, 700], [1249, 750], 10, R); trail([1273, 722], [1285, 790], 6, R); trail([1284, 800], [1306, 830], 8, R);
trail([1170, 912], [1181, 850], 9, '#008000'); trail([1180, 800], [1198, 770], 8, '#008000'); trail([1300, 900], [1325, 800], 12, '#008000');
trail([1475, 345], [1503, 384], 12, R); trail([1508, 340], [1530, 370], 10, R); trail([1426, 500], [1436, 480], 6, '#008000'); trail([1436, 440], [1450, 369], 10, '#008000'); trail([1508, 395], [1535, 366], 10, '#008000'); trail([1366, 690], [1380, 650], 8, '#008000'); trail([1133, 830], [1153, 900], 9, R); trail([1400, 700], [1412, 570], 8, '#008000');

const band = (y, h, fill, o) => add(q, 'rect', { x: 1129, y, width: 688, height: h, fill, 'fill-opacity': o });
band(65, 41, '#ff0', .25); band(302, 41, '#f00', .25); band(440, 21, '#080', .25); band(543, 41, '#080', .25); band(743, 42, '#ff0', .25);
[[85, '#a0ff00'], [105, '#f02000'], [314, '#40c000'], [322, '#a00000'], [563, '#005a00'], [764, '#ffa500'], [876, '#0f0'], [920, '#800000']].forEach(([y, c]) => hline(q, 1129, 1787, y, c));
add(q, 'rect', { x: 1129, y: 449, width: 655, height: 3, fill: '#006400' }); add(q, 'rect', { x: 1617, y: 448, width: 166, height: 5, fill: '#803000' }); hline(q, 1129, 1784, 450, '#00a000');
hline(q, 1129, 1340, 615, '#40e000'); hline(q, 1421, 1785, 615, '#808000');

const curve = [...pts('1243,175 1240,205 1248,235 1250,280 1256,290 1262,340 1252,348 1243,362 1246,405 1253,440 1256,500 1262,518 1250,555 1256,595 1249,622 1237,640 1236,670 1222,682 1195,705 1178,718 1160,730 1142,742 1125,750 1117,790 1115,804 1075,818 1068,828 1077,850 1065,862 1048,880 1042,902 1007,913 963,925 925,938 906,948 930,962 952,978 967,985 953,998 970,1010 984,1018 972,1033 955,1070 975,1082 945,1105 920,1125 915,1142 920,1165 868,1180 852,1190 862,1205 845,1225 815,1235 833,1248 858,1260 880,1280 862,1298 823,1318 808,1333 767,1345 722,1355 725,1370 750,1385 742,1395 772,1412 768,1428 795,1440 810,1455 838,1475', F),
  ...pts('1020,285 1060,292 1068,320 1058,350 1098,362 1118,385 1113,400 1132,412 1152,425 1183,430 1168,445 1175,470 1190,487 1193,508 1165,520 1182,540 1183,555 1148,570 1155,585 1172,605 1160,625 1145,630 1128,648 1158,660 1175,675 1200,680 1218,705 1235,720', H),
  ...pts('948,0 962,40 972,60 975,85 990,100 1003,112 1035,125 1052,155 1047,160 1057,185 1040,205 1030,235 1020,243 1035,290 1032,305 1042,345 1050,360 1060,375 1035,395 1025,432 1005,445 980,460 960,475 945,488 930,500 912,513 888,525 878,538 890,548 905,570 885,585 875,610 868,630 832,640 828,655 838,668 848,680 838,692 808,708 800,715 810,740 817,750 800,765 818,775 857,790 873,810 842,822 857,835 868,858 857,870 833,880 840,905 825,930 812,960 808,1003 790,1020 797,1038 780,1050 745,1065 750,1075 765,1090', K)];
let d = '';
curve.forEach(([x, y], i) => { x = Math.round(x) + .5; y = Math.round(y) + .5; d += i ? `H${x}V${y}` : `M${x} ${y}`; });
add(q, 'path', { d, fill: 'none', stroke: '#c8c8c8' });

const box = (x, y, h, stroke, s) => {
  add(q, 'path', { d: `M${x} ${y}l4 ${-h / 2}H1816.500v${h}H${x + 4}z`, fill: '#000', stroke });
  text(q, 1814, y + 4, 'tag end', '#fff', s);
};
box(1783, 85, 14, '#808000', '841.9'); box(1787, 105, 12, '#f02000', '841.4'); box(1787, 315, 12, '#40c000', '836.2'); box(1783, 322, 14, '#800000', '836.0');
box(1783, 450, 15, '#006040', '832.8'); box(1783, 563, 15, '#004000', '830.0'); box(1783, 615, 16, '#800000', '828.7'); box(1783, 764, 15, '#808000', '825.0'); box(1787, 876, 12, '#0f0', '822.2'); box(1783, 920, 16, '#700000', '821.1');
add(q, 'path', { d: 'M1787.500 63.500v20l15-10zM1804.500 63.500h3v20h-3z', fill: 'none', stroke: '#d8d8b0' });

const note = (x, y, c, ...names) => {
  add(q, 'path', { d: `M${x - 11} ${y + .5}l7 -4v8z`, fill: c });
  names.forEach(([s, k]) => text(q, x, y + 4, 'note', k || c, s));
};
const W = '#d3d3d3', Y = '#ff0';
note(1435, 422, W, ['HoD 833.5']); note(1604, 330, '#ffc000', ['IBH 835.8']); note(1604, 374, '#e01010', ['VPOC 834.7']); note(1604, 390, W, ['Mid 834.3']); note(1604, 426, L, ['IBL 833.4', Y], ['Open 833.4']);
note(1180, 615, W, ['YHoD 828.7']); note(1180, 768, '#dcdc98', ['HoD 824.9']); note(1180, 800, '#4682b4', ['OVAH 824.1', '#5a6ac8'], ['YVAH 824.1']); note(1180, 832, Y, ['IBH 823.3']); note(1180, 828, '#00bfff', ['Close 823.4']); note(1180, 916, W, ['Mid 821.2']); note(1180, 980, W, ['YClose 819.6']);
note(1354, 683, Y, ['IBH 827.0']); note(1354, 731, L, ['Open 825.8']); note(1354, 768, Y, ['IBL 824.9']); note(1354, 796, '#e03030', ['VPOC 824.2']); note(1354, 792, W, ['Mid 824.3']);
note(1435, 659, W, ['Mid 827.6']); note(1435, 683, '#6a5acd', ['ONH 827.0']); note(1435, 691, Y, ['IBH 826.8']); note(1435, 768, '#dcdc98', ['YHoD 824.9']); note(1435, 808, L, ['Open 823.9']); note(1435, 816, '#0ff', ['HG 823.7']); note(1435, 828, W, ['YClose 823.4']); note(1435, 856, '#4682b4', ['YVAH 822.7']); note(1435, 900, '#6a5acd', ['ONL 821.6']); note(1435, 896, W, ['IBL 821.7', Y], ['LoD 821.7']); note(1435, 984, '#4682b4', ['YVAL 819.5']);
[[1419, 918, '∑ 80 v 103K (78%)'], [1419, 930, '‡13.80 v 11.50pts (103%)'], [1419, 942, 'IB 5.10 v 6.80pts (75%)'], [1419, 954, 'Gap +0.5pts'], [1338, 928, '∑ 15K'], [1338, 939, '‡5.40pts'], [1588, 486, '∑ 8K'], [1588, 498, '‡3.30pts']].forEach(([x, y, s]) => text(q, x, y, 'note end', W, s));

add(q, 'rect', { x: 1699.5, y: 960.5, width: 109, height: 34, fill: '#000', stroke: '#fff' });
text(q, 1754, 975, 'small mid', '#fff', 'Composite Start:'); text(q, 1754, 987, 'small mid', '#fff', '6/3/2012 (197d)');
line(q, 1817.5, 58, 1817.5, 1004, PALE); hline(q, 1130, 1818, 1003, PALE);
for (let p = 842; p >= 820; p--) { const y = Math.round(81.2 + (842 - p) * 40.13); hline(q, 1818, 1824, y, PALE); if (p !== 833) text(q, 1825, y + 5, '', PALE, p.toFixed(1)); }
priceTag(q, 1819, 352, '#f00', PALE, '835.2'); priceTag(q, 1819, 373, '#800000', PALE, '834.7'); priceTag(q, 1819, 449, '#800000', PALE, '832.8'); priceTag(q, 1819, 441, '#ff0', '#000', '833.0');
[[1179, '12/16'], [1265, '12/17'], [1513, '12/18']].forEach(([x, s]) => { line(q, x + .5, 1004, x + .5, 1009, PALE); text(q, x, 1022, 'mid', PALE, s); });
```
